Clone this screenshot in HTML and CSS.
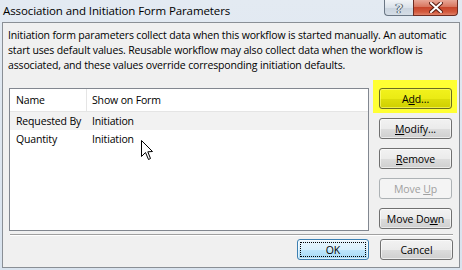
FILE: index.html
```html
<!DOCTYPE html>
<html>
<head>
<meta charset="utf-8">
<link rel="stylesheet" href="styles.css">
</head>
<body>
<div class="window">
  <div class="titlebar">
    <span class="title">Association and Initiation Form Parameters</span>
    <div class="controls">
      <div class="ctl help">?</div>
      <div class="ctl close">
        <svg width="14" height="11" viewBox="0 0 14 11"><path d="M2 1 L12 10 M12 1 L2 10" stroke="#5a1d12" stroke-width="4" stroke-linecap="square"/><path d="M2 1 L12 10 M12 1 L2 10" stroke="#fff" stroke-width="2" stroke-linecap="square"/></svg>
      </div>
    </div>
  </div>
  <div class="client">
    <p class="desc">Initiation form parameters collect data when this workflow is started manually. An automatic<br>start uses default values. Reusable workflow may also collect data when the workflow is<br>associated, and these values override corresponding initiation defaults.</p>
    <div class="main">
      <div class="list">
        <div class="row head"><span class="c1">Name</span><span class="c2">Show on Form</span></div>
        <div class="row sel"><span class="c1">Requested By</span><span class="c2">Initiation</span></div>
        <div class="row"><span class="c1">Quantity</span><span class="c2">Initiation</span></div>
        <svg class="cursor" width="13" height="21" viewBox="0 0 13 21"><path d="M0.5 0.5 L0.5 16.5 L4.5 12.5 L7.5 19.5 L9.5 18.5 L6.8 11.8 L11.5 11.5 Z" fill="#fff" stroke="#000" stroke-width="1" stroke-linejoin="miter"/></svg>
      </div>
      <div class="buttons">
        <div class="highlight"><button class="btn add"><span>A<u>d</u>d...</span></button></div>
        <button class="btn"><span><u>M</u>odify...</span></button>
        <button class="btn"><span><u>R</u>emove</span></button>
        <button class="btn disabled"><span>Move <u>U</u>p</span></button>
        <button class="btn"><span>Move Do<u>w</u>n</span></button>
      </div>
    </div>
    <div class="sep"></div>
    <div class="footer">
      <button class="btn ok"><span class="focus">OK</span></button>
      <button class="btn"><span>Cancel</span></button>
    </div>
  </div>
</div>
</body>
</html>
```
FILE: styles.css
```css
* { box-sizing: border-box; }
html, body { margin: 0; padding: 0; }
body {
  width: 462px; height: 270px; overflow: hidden;
  font-family: "Open Sans", "Noto Sans", sans-serif;
  font-size: 10.5px;
  letter-spacing: -0.15px;
  color: #000;
}
.window {
  width: 462px; height: 270px;
  background: linear-gradient(#e3eaf2, #d9e3ee);
  display: flex; flex-direction: column;
}
.titlebar {
  height: 22px; flex: none;
  display: flex; align-items: flex-start; justify-content: space-between;
}
.title {
  font-size: 11.5px; letter-spacing: -0.1px; padding: 3px 0 0 3px; line-height: 16px;
}
.controls { display: flex; margin-right: 4px; }
.ctl {
  height: 16px; border: 1px solid #6a7684; border-top: none;
  display: flex; align-items: center; justify-content: center;
}
.help {
  width: 29px; border-radius: 0 0 0 4px; border-right: none;
  background: linear-gradient(#f1f4f7, #dbe2ea 50%, #c9d3de 51%, #d5dde6);
  color: #e8edf2; font-weight: bold; font-size: 13px;
  text-shadow: 0 0 1px #44505c, 0 0 1px #44505c, 1px 0 0 #5a6672, -1px 0 0 #5a6672;
}
.close {
  width: 45px; border-radius: 0 0 4px 0; border-color: #6e2c22;
  background: linear-gradient(#e8a797, #d8765f 45%, #c7462c 50%, #d35a3e 80%, #e0826a);
}
.client {
  flex: 1;
  margin: 0 2px 2px 2px;
  border: 1px solid #8a8f95;
  background: #f0f0f0;
  padding: 5px 6px 0 6px;
  display: flex; flex-direction: column;
}
.desc {
  margin: 0 0 0 -1px; line-height: 15px; white-space: nowrap;
}
.main {
  display: flex; gap: 10px; margin-top: 15px;
}
.list {
  width: 360px; height: 143px;
  background: #fff;
  border: 1px solid #828790;
  position: relative;
}
.row { display: flex; height: 18px; align-items: center; }
.row.head { height: 23px; border-bottom: 1px solid #e5e5e5; }
.row.head .c1 { border-right: 1px solid #e5e5e5; }
.c1 { width: 77px; padding-left: 6px; height: 100%; display: flex; align-items: center; }
.c2 { padding-left: 5px; }
.row.sel { background: #f2f2f2; }
.cursor { position: absolute; left: 131px; top: 51px; }
.buttons {
  display: flex; flex-direction: column; gap: 9px; width: 73px;
}
.highlight {
  background: #ffff33;
  margin: -8px -5px -4px -6px;
  padding: 8px 5px 4px 6px;
}
.btn {
  width: 73px; height: 21px; padding: 0;
  font-family: inherit; font-size: 10.5px; letter-spacing: -0.1px; color: #000;
  border: 1px solid #707070; border-radius: 3px;
  background: linear-gradient(#f2f2f2, #ebebeb 50%, #dddddd 51%, #cfcfcf);
  box-shadow: inset 0 0 0 1px rgba(255,255,255,0.6);
  display: flex; align-items: center; justify-content: center;
}
.btn u { text-decoration: underline; text-underline-offset: 1px; }
.btn.add {
  border-color: #6b6b20;
  background: linear-gradient(#f2f21c, #ebeb14 50%, #dddd0a 51%, #cfcf00);
  box-shadow: inset 0 0 0 1px rgba(255,255,120,0.6);
}
.btn.disabled {
  color: #a0a0a0; border-color: #adb2b5;
  background: #f4f4f4; box-shadow: none;
}
.sep {
  height: 2px; margin: 3px 0 0 1px;
  border-top: 1px solid #a0a0a0; border-bottom: 1px solid #fff;
}
.footer {
  display: flex; justify-content: flex-end; gap: 11px; margin-top: 3px;
}
.btn.ok {
  width: 72px;
  border-color: #3c7fb1;
  background: linear-gradient(#eaf6fd, #d9f0fc 50%, #bee6fd 51%, #a7d9f5);
  padding: 2px;
}
.focus {
  width: 100%; height: 100%;
  border: 1px dotted #000;
  display: flex; align-items: center; justify-content: center;
}
```
